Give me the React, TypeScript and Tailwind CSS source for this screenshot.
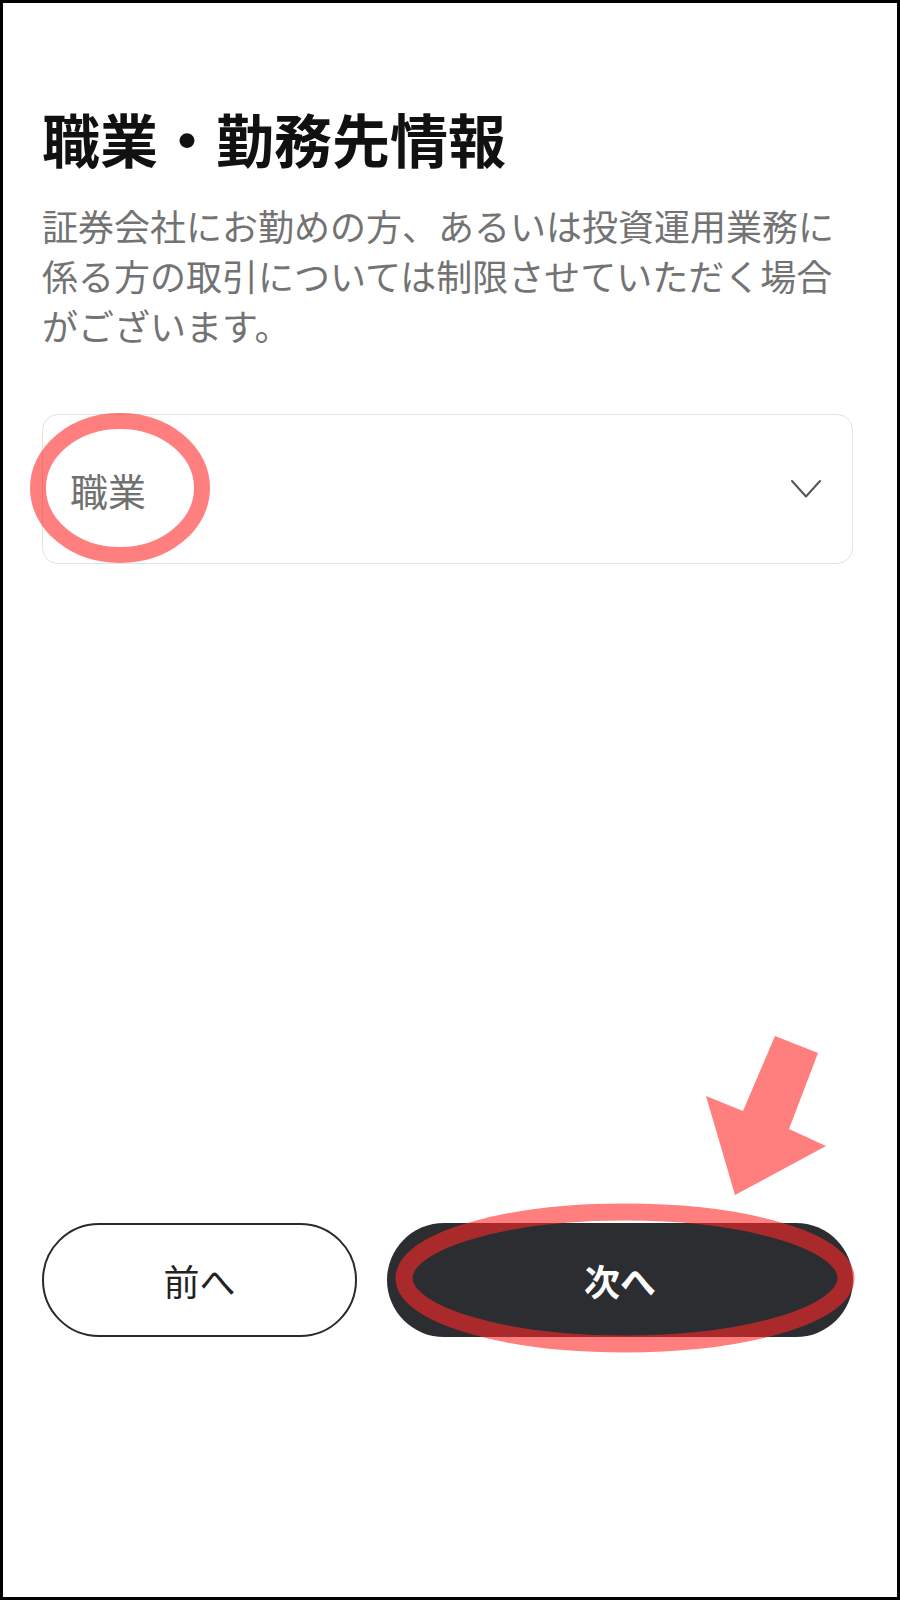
const FONT = "font-['Noto_Sans_CJK_JP','Noto_Sans',sans-serif]";

/** Pink highlight marks drawn over the form (screenshot annotations). */
function Annotations() {
  return (
    <svg
      className="pointer-events-none absolute left-[-3px] top-[-3px] h-[1600px] w-[900px]"
      viewBox="0 0 900 1600"
    >
      <g opacity="0.6">
        <ellipse cx="120" cy="488" rx="82" ry="67" fill="none" stroke="rgb(255,40,40)" strokeWidth="16" />
        <ellipse cx="625" cy="1278" rx="221" ry="66" fill="none" stroke="rgb(255,40,40)" strokeWidth="17" />
      </g>
      <polygon
        points="775,1036 818,1053 789,1129 826,1146 735,1195 706,1096 743,1111"
        fill="rgb(255,40,40)"
        opacity="0.6"
      />
    </svg>
  );
}

export default function App() {
  return (
    <div
      className={`relative box-border flex h-[1600px] w-[900px] flex-col border-[3px] border-black bg-white pl-[39px] pr-[44px] pt-[101px] pb-[260px] ${FONT}`}
    >
      <h1 className="text-[58px] font-bold leading-[68px] text-[#111111]">
        職業・勤務先情報
      </h1>
      <p className="mt-[28px] text-[36px] leading-[50px] text-[#737373]">
        証券会社にお勤めの方、あるいは投資運用業務に係る方の取引については制限させていただく場合がございます。
      </p>

      <button
        type="button"
        className="mt-[64px] flex h-[150px] w-full items-center justify-between rounded-[16px] border border-[#e2e2e2] bg-white pl-[27px] pr-[31px] text-left"
      >
        <span className="text-[38px] text-[#707070]">職業</span>
        <svg width="30" height="18" viewBox="0 0 30 18" fill="none">
          <polyline points="1,1 15,16.5 29,1" stroke="#555555" strokeWidth="2" strokeLinecap="round" strokeLinejoin="round" />
        </svg>
      </button>

      <div className="mt-auto flex gap-[30px]">
        <button
          type="button"
          className="flex h-[114px] flex-[2] items-center justify-center rounded-full border-2 border-[#2a2a2a] bg-white text-[36px] font-normal text-[#222222]"
        >
          前へ
        </button>
        <button
          type="button"
          className="flex h-[114px] flex-[3] items-center justify-center rounded-full bg-[#2b2d31] text-[36px] font-bold text-white"
        >
          次へ
        </button>
      </div>

      <Annotations />
    </div>
  );
}
